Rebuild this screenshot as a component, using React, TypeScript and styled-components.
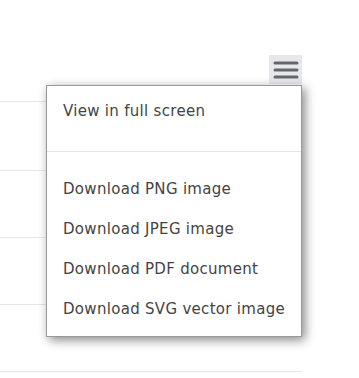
import styled, { createGlobalStyle } from "styled-components";

const GlobalStyle = createGlobalStyle`
  body {
    margin: 0;
    background: #ffffff;
    font-family: "DejaVu Sans", "Open Sans", sans-serif;
  }
`;

const Chart = styled.div`
  position: relative;
  width: 359px;
  height: 378px;
  overflow: hidden;
`;

const PlotArea = styled.div`
  width: 302px;
  display: flex;
  flex-direction: column;
`;

const Header = styled.div`
  height: 101px;
  display: flex;
  justify-content: flex-end;
  align-items: flex-start;
  padding-top: 55px;
  box-sizing: border-box;
`;

const GridRow = styled.div<{ $h: number }>`
  height: ${(p) => p.$h}px;
  border-top: 1px solid #e6e6e6;
  box-sizing: border-box;
`;

const MenuButton = styled.button`
  width: 33px;
  height: 29px;
  border: none;
  padding: 0;
  background: #e6e8ee;
  display: flex;
  align-items: center;
  justify-content: center;
`;

const Menu = styled.ul`
  position: absolute;
  left: 46px;
  top: 85px;
  width: 254px;
  margin: 0;
  padding: 5px 0 7px;
  list-style: none;
  background: #ffffff;
  border: 1px solid #999999;
  box-shadow: 3px 3px 10px #888888;
`;

const Item = styled.li`
  height: 40px;
  line-height: 40px;
  padding-left: 16px;
  font-size: 15px;
  letter-spacing: 0.3px;
  color: #444444;
  white-space: nowrap;
`;

const Separator = styled.li`
  height: 1px;
  margin: 20px 0 17px;
  background: #e6e6e6;
`;

const items = [
  "Download PNG image",
  "Download JPEG image",
  "Download PDF document",
  "Download SVG vector image",
];

export default function App() {
  return (
    <>
      <GlobalStyle />
      <Chart>
        <PlotArea>
          <Header>
            <MenuButton aria-label="Chart menu">
              <svg width="26" height="18" viewBox="0 0 26 18">
                <g stroke="#666666" strokeWidth="3" strokeLinecap="round">
                  <line x1="2" y1="2" x2="24" y2="2" />
                  <line x1="2" y1="9" x2="24" y2="9" />
                  <line x1="2" y1="16" x2="24" y2="16" />
                </g>
              </svg>
            </MenuButton>
          </Header>
          <GridRow $h={69} />
          <GridRow $h={67} />
          <GridRow $h={67} />
          <GridRow $h={67} />
          <GridRow $h={7} />
        </PlotArea>
        <Menu>
          <Item>View in full screen</Item>
          <Separator />
          {items.map((t) => (
            <Item key={t}>{t}</Item>
          ))}
        </Menu>
      </Chart>
    </>
  );
}
